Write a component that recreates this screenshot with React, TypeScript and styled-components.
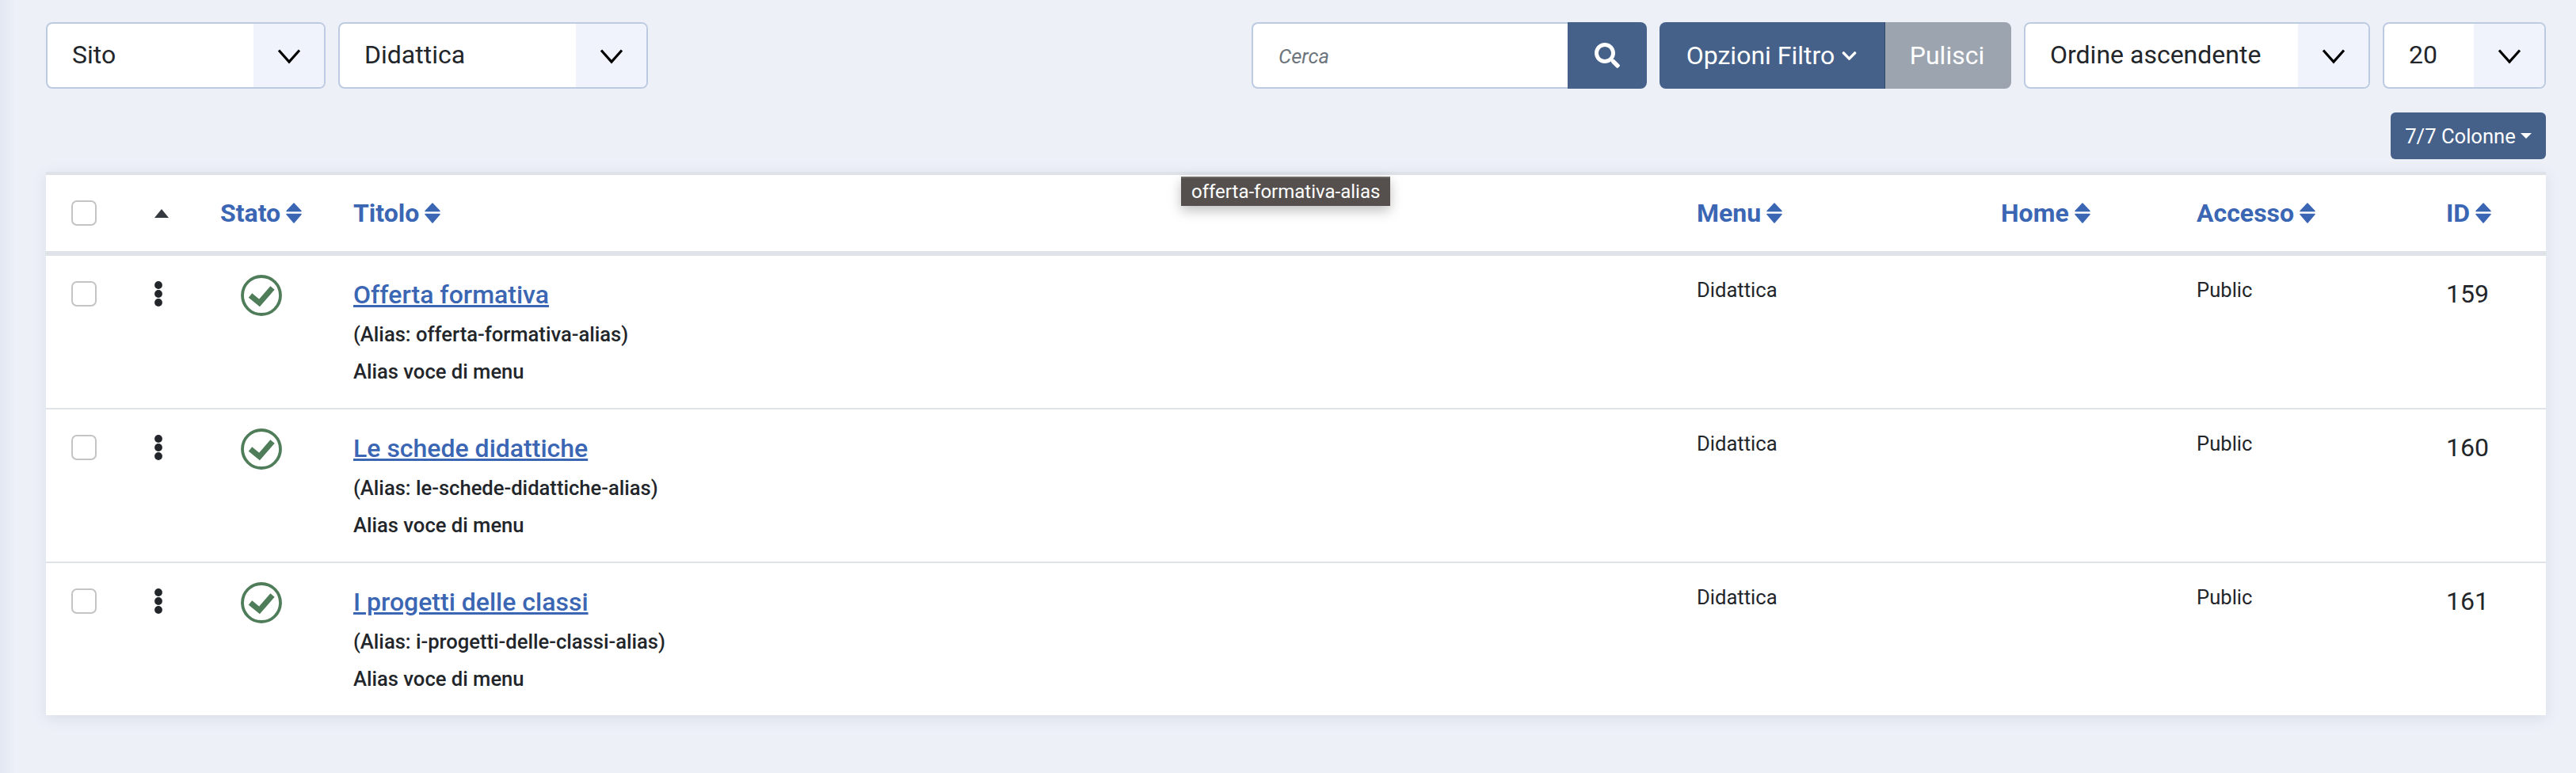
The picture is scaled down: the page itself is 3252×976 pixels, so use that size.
import React from 'react';
import styled, { createGlobalStyle } from 'styled-components';
import { FaChevronDown, FaSearch } from 'react-icons/fa';

const rows = [
  { id: 159, title: 'Offerta formativa', alias: 'offerta-formativa-alias' },
  { id: 160, title: 'Le schede didattiche', alias: 'le-schede-didattiche-alias' },
  { id: 161, title: 'I progetti delle classi', alias: 'i-progetti-delle-classi-alias' }
];

const columns = [
  { label: 'Menu' },
  { label: 'Home' },
  { label: 'Accesso' },
  { label: 'ID' }
];

const Chevron = () => (
  <svg width="30" height="20" viewBox="0 0 30 20" fill="none">
    <path d="M2 2.5 L15 17 L28 2.5" stroke="#000" strokeWidth="3.2" />
  </svg>
);

const SortIcon = () => (
  <svg width="20" height="26" viewBox="0 0 20 26" fill="currentColor" stroke="currentColor" strokeWidth="1.5" strokeLinejoin="round">
    <path d="M10 1 L19 10.5 H1 Z" />
    <path d="M1 14.5 H19 L10 25 Z" />
  </svg>
);

const StatusIcon = () => (
  <svg width="52" height="52" viewBox="0 0 52 52" fill="none" stroke="currentColor">
    <circle cx="26" cy="26" r="24" strokeWidth="3.8" />
    <path d="M12 26 L23.5 35.5 L40 16.5" strokeWidth="7" />
  </svg>
);

const Select = ({ label, width, arrow }: { label: string; width: number; arrow: number }) => (
  <SelectBox $width={width}>
    <SelectLabel>{label}</SelectLabel>
    <SelectArrow $width={arrow}>
      <Chevron />
    </SelectArrow>
  </SelectBox>
);

const SortLabel = ({ label }: { label: string }) => (
  <SortLink>
    {label}
    <SortIcon />
  </SortLink>
);

const App = () => {
  return (
    <Page>
      <GlobalStyle />
      <Toolbar>
        <Select label="Sito" width={353} arrow={91} />
        <Select label="Didattica" width={391} arrow={91} />
        <SearchGroup>
          <SearchInput>Cerca</SearchInput>
          <SearchButton>
            <FaSearch />
          </SearchButton>
        </SearchGroup>
        <FilterGroup>
          <FilterButton>
            Opzioni Filtro
            <FaChevronDown />
          </FilterButton>
          <ClearButton>Pulisci</ClearButton>
        </FilterGroup>
        <Select label="Ordine ascendente" width={437} arrow={91} />
        <Select label="20" width={206} arrow={91} />
      </Toolbar>
      <ColumnsRow>
        <ColumnsButton>
          7/7 Colonne
          <Caret />
        </ColumnsButton>
      </ColumnsRow>
      <TableWrap>
        <Table>
          <colgroup>
            <Col $width={90} />
            <Col $width={130} />
            <Col $width={168} />
            <Col $width={1696} />
            <Col $width={384} />
            <Col $width={247} />
            <Col $width={315} />
            <Col $width={126} />
          </colgroup>
          <thead>
            <tr>
              <HeadCell $pad={32}>
                <CheckBox />
              </HeadCell>
              <HeadCell $pad={47}>
                <OrderArrow />
              </HeadCell>
              <HeadCell>
                <SortLabel label="Stato" />
              </HeadCell>
              <HeadCell>
                <SortLabel label="Titolo" />
              </HeadCell>
              {columns.map((col) => (
                <HeadCell key={col.label}>
                  <SortLabel label={col.label} />
                </HeadCell>
              ))}
            </tr>
          </thead>
          <tbody>
            {rows.map((row) => (
              <tr key={row.id}>
                <CheckCell>
                  <CheckBox />
                </CheckCell>
                <HandleCell>
                  <svg width="12" height="34" viewBox="0 0 12 34" fill="#22262a">
                    <circle cx="6" cy="6" r="4.9" />
                    <circle cx="6" cy="17" r="4.9" />
                    <circle cx="6" cy="28" r="4.9" />
                  </svg>
                </HandleCell>
                <StatusCell>
                  <StatusIcon />
                </StatusCell>
                <TitleCell>
                  <TitleLink>{row.title}</TitleLink>
                  <AliasLine>(Alias: {row.alias})</AliasLine>
                  <TypeLine>Alias voce di menu</TypeLine>
                </TitleCell>
                <TextCell>Didattica</TextCell>
                <TextCell />
                <TextCell>Public</TextCell>
                <IdCell>{row.id}</IdCell>
              </tr>
            ))}
          </tbody>
        </Table>
        <Tooltip>offerta-formativa-alias</Tooltip>
      </TableWrap>
    </Page>
  );
};

const GlobalStyle = createGlobalStyle`
  html, body {
    margin: 0;
    padding: 0;
    background: #edf0f7;
  }
  body {
    font-family: Roboto, "Liberation Sans", sans-serif;
    color: #22262a;
  }
`;

const Page = styled.div`
  box-sizing: border-box;
  height: 976px;
  padding: 28px 38px 0 58px;
  background: linear-gradient(90deg, #e2e7f2 0, #edf0f7 20px);
`;

const Toolbar = styled.div`
  display: flex;
  align-items: stretch;
  height: 84px;
  gap: 16px;
`;

const SelectBox = styled.div<{ $width: number }>`
  box-sizing: border-box;
  display: flex;
  width: ${(p) => p.$width}px;
  background: #fff;
  border: 2px solid #bccbe1;
  border-radius: 8px;
  overflow: hidden;
`;

const SelectLabel = styled.div`
  flex: 1;
  padding-left: 31px;
  font-size: 32px;
  line-height: 79px;
  color: #22262a;
`;

const SelectArrow = styled.div<{ $width: number }>`
  display: flex;
  align-items: center;
  justify-content: center;
  width: ${(p) => p.$width - 2}px;
  padding-top: 2px;
  background: #f0f3fb;
`;

const SearchGroup = styled.div`
  display: flex;
  margin-left: auto;
  width: 499px;
`;

const SearchInput = styled.div`
  box-sizing: border-box;
  flex: 1;
  padding-left: 32px;
  background: #fff;
  border: 2px solid #bccbe1;
  border-right: 0;
  border-radius: 8px 0 0 8px;
  font-size: 25.6px;
  font-style: italic;
  line-height: 83px;
  color: #6d757d;
`;

const SearchButton = styled.div`
  display: flex;
  align-items: center;
  justify-content: center;
  width: 100px;
  background: #45618a;
  border-radius: 0 8px 8px 0;
  color: #fff;
  font-size: 32px;
`;

const FilterGroup = styled.div`
  display: flex;
  width: 444px;
`;

const FilterButton = styled.div`
  display: flex;
  align-items: center;
  justify-content: center;
  gap: 8px;
  width: 284px;
  background: #45618a;
  border-right: 1px solid #33496b;
  border-radius: 8px 0 0 8px;
  font-size: 32px;
  font-weight: 400;
  color: #fff;

  svg {
    width: 21px;
    height: 21px;
  }
`;

const ClearButton = styled.div`
  display: flex;
  align-items: center;
  justify-content: center;
  flex: 1;
  padding-right: 3px;
  background: #9ca4b0;
  border-radius: 0 8px 8px 0;
  font-size: 32px;
  color: #fff;
`;

const ColumnsRow = styled.div`
  display: flex;
  justify-content: flex-end;
  margin-top: 30px;
`;

const ColumnsButton = styled.div`
  display: flex;
  align-items: center;
  justify-content: center;
  gap: 6px;
  width: 196px;
  height: 59px;
  background: #45618a;
  border-radius: 6px;
  font-size: 25.6px;
  color: #fff;
`;

const Caret = styled.span`
  width: 0;
  height: 0;
  border-left: 7px solid transparent;
  border-right: 7px solid transparent;
  border-top: 7px solid #fff;
`;

const TableWrap = styled.div`
  position: relative;
  margin-top: 16px;
  background: #fff;
  box-shadow: 0 4px 16px rgba(120, 130, 160, 0.16);
`;

const Table = styled.table`
  width: 100%;
  table-layout: fixed;
  border-collapse: separate;
  border-spacing: 0;
`;

const Col = styled.col<{ $width: number }>`
  width: ${(p) => p.$width}px;
`;

const HeadCell = styled.th<{ $pad?: number }>`
  box-sizing: border-box;
  height: 106px;
  padding: 0 0 0 ${(p) => p.$pad || 0}px;
  border-top: 4px solid #dfe3e9;
  border-bottom: 6px solid #dfe3e9;
  text-align: left;
  vertical-align: middle;
  font-weight: 700;
`;

const SortLink = styled.span`
  display: inline-flex;
  align-items: center;
  gap: 7px;
  font-size: 32px;
  font-weight: 700;
  color: #3b66b3;
`;

const OrderArrow = styled.span`
  display: block;
  width: 0;
  height: 0;
  border-left: 9px solid transparent;
  border-right: 9px solid transparent;
  border-bottom: 11px solid #343a40;
`;

const CheckBox = styled.span`
  box-sizing: border-box;
  display: block;
  width: 32px;
  height: 32px;
  background: #fff;
  border: 2px solid #c4c4c4;
  border-radius: 7px;
`;

const BodyCell = styled.td`
  padding: 0;
  vertical-align: top;
  border-bottom: 2px solid #dfe3e9;

  tr:last-child > & {
    border-bottom: 0;
  }
`;

const CheckCell = styled(BodyCell)`
  padding: 32px 0 0 32px;
`;

const HandleCell = styled(BodyCell)`
  padding: 31px 0 0 46px;
`;

const StatusCell = styled(BodyCell)`
  padding: 24px 0 0 26px;

  svg {
    display: block;
    color: #4f7d59;
  }
`;

const TitleCell = styled(BodyCell)`
  padding: 25px 0 23px;
`;

const TitleLink = styled.a`
  display: block;
  width: fit-content;
  font-size: 32px;
  font-weight: 500;
  line-height: 48px;
  color: #3b66b3;
  text-decoration: underline;
`;

const AliasLine = styled.div`
  margin-top: 2px;
  font-size: 25.6px;
  font-weight: 500;
  line-height: 48px;
  color: #22262a;
`;

const TypeLine = styled(AliasLine)`
  margin-top: 1px;
  line-height: 45px;
`;

const TextCell = styled(BodyCell)`
  padding-top: 23px;
  font-size: 25.6px;
  line-height: 40px;
`;

const IdCell = styled(BodyCell)`
  padding-top: 25px;
  font-size: 32px;
  line-height: 46px;
`;

const Tooltip = styled.div`
  position: absolute;
  top: 6px;
  left: 1433px;
  box-sizing: border-box;
  height: 37px;
  padding: 0 13px;
  background: #55504e;
  border-top: 2px solid #6b6765;
  font-size: 24px;
  line-height: 35px;
  color: #fff;
  box-shadow: 0 6px 16px rgba(0, 0, 0, 0.25);
`;

export default App;
